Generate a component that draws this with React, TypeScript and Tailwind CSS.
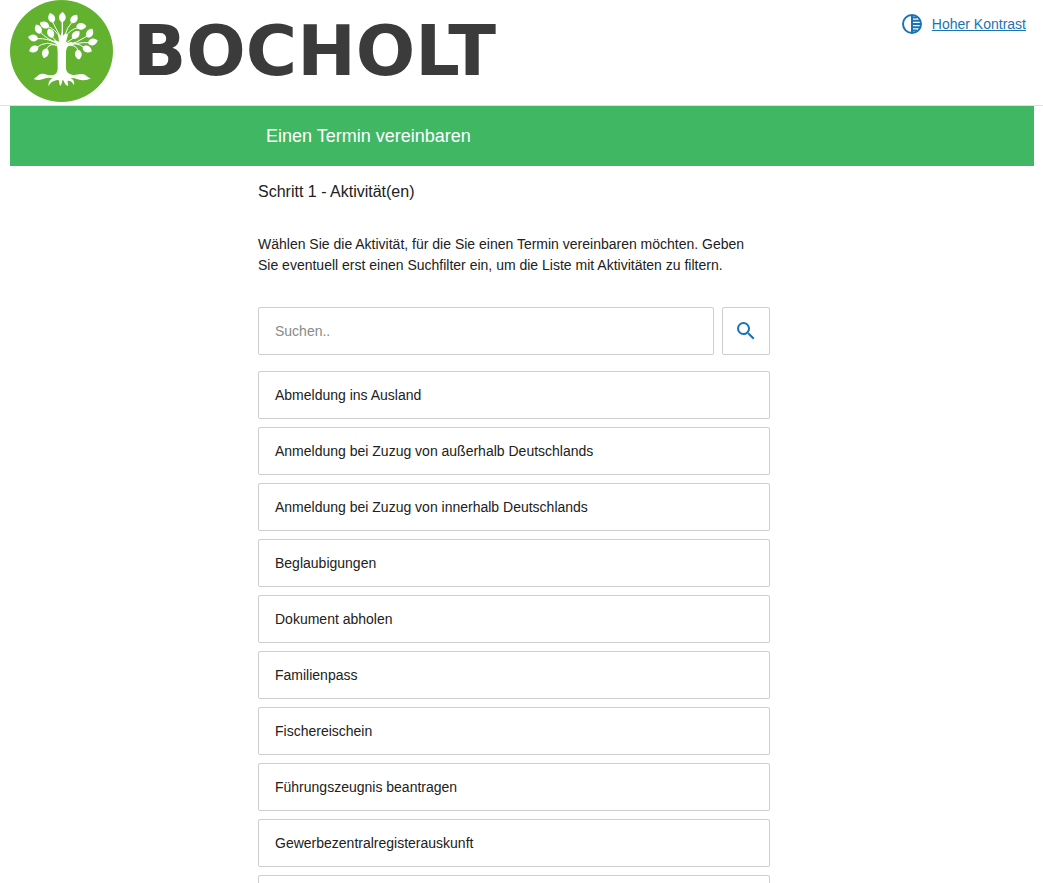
import { useState } from 'react';

const activities = [
  'Abmeldung ins Ausland',
  'Anmeldung bei Zuzug von außerhalb Deutschlands',
  'Anmeldung bei Zuzug von innerhalb Deutschlands',
  'Beglaubigungen',
  'Dokument abholen',
  'Familienpass',
  'Fischereischein',
  'Führungszeugnis beantragen',
  'Gewerbezentralregisterauskunft',
];

// Each leaf: centre x, centre y, rotation of its tip from upright.
const leaves = [
  [155, 54, -20],
  [187, 52, 4],
  [222, 57, 35],
  [134, 75, -65],
  [115, 88, -25],
  [152, 100, -25],
  [243, 79, 88],
  [227, 105, 45],
  [269, 100, 30],
  [278, 126, 75],
  [261, 147, 115],
  [235, 163, 172],
  [100, 114, -80],
  [102, 147, -115],
  [136, 159, 195],
];

function TreeLogo() {
  return (
    <svg viewBox="30 0 309 306" className="h-[102px] w-[103px] shrink-0" aria-hidden="true">
      <ellipse cx="184.500" cy="153" rx="154.500" ry="153" fill="#62b22f" />
      <g fill="#fff">
        {leaves.map(([x, y, r]) => (
          <path
            key={`${x}-${y}`}
            d="M0-16C7-11 11-5 10 2C9 9 5 13 0 14C-5 13-9 9-10 2C-11-5-7-11 0-16Z"
            transform={`translate(${x} ${y}) rotate(${r})`}
          />
        ))}
        <path d="M160 120C169 128 173 139 173 158L173 205C173 219 166 226 154 226C137 226 132 217 119 223C114 226 108 233 101 237C110 240 117 241 127 238C137 235 144 231 157 235C150 240 144 246 146 259C152 246 160 242 173 240C181 240 175 249 181 258C187 251 185 245 188 240C195 243 190 251 203 258C207 255 202 248 203 242C212 242 218 246 221 256C226 246 220 238 211 234C228 233 237 241 250 241C260 241 265 238 273 235C262 233 257 221 244 222C232 222 226 227 216 224C203 221 198 214 198 202L198 158C198 143 206 134 219 129L214 126L197 130L204 104L196 99L190 107L187 90L183 107L174 101L177 125Z" />
      </g>
      <g fill="none" stroke="#fff" strokeWidth="3" strokeLinecap="round">
        <path d="M187 64V112" strokeWidth="4" />
        <path d="M158 66Q168 86 181 110M216 66Q202 80 193 110" />
        <path d="M143 79Q166 86 182 116M236 83Q208 86 192 118" />
        <path d="M121 96Q139 119 178 130M156 110L176 130M222 113L196 130" />
        <path d="M112 116Q144 113 178 135M262 108Q230 130 197 136M270 128Q230 126 196 138" />
        <path d="M110 142Q141 118 177 140M253 143Q229 121 196 140" />
        <path d="M139 148Q149 125 176 138M234 151Q228 130 197 138" />
      </g>
    </svg>
  );
}

function ContrastIcon() {
  return (
    <svg viewBox="0 0 22 22" className="size-[22px]" aria-hidden="true">
      <circle cx="11" cy="11" r="9" fill="none" stroke="#1a73b5" strokeWidth="2" />
      <path
        d="M11 2V20M11 4.500H16M11 7.750H19M11 11H20M11 14.250H19M11 17.500H16"
        fill="none"
        stroke="#1a73b5"
        strokeWidth="2"
      />
    </svg>
  );
}

export default function App() {
  const [query, setQuery] = useState('');
  const shown = activities.filter((name) => name.toLowerCase().includes(query.toLowerCase()));

  return (
    <div className="min-h-screen bg-white font-['Liberation_Sans',Arial,sans-serif] text-sm text-[#212121]">
      <header className="border-b border-[#e0e0e0] pl-px">
        <div className="mx-auto flex h-[105px] max-w-[1024px] items-start justify-between">
          <div className="flex items-center gap-5">
            <TreeLogo />
            <span className="font-['DejaVu_Sans',sans-serif] text-[70px] leading-none font-bold text-[#3b3b3b]">
              BOCHOLT
            </span>
          </div>
          <a href="#kontrast" className="mt-[13px] mr-2 flex items-center gap-[9px] text-[#1a73b5] underline">
            <ContrastIcon />
            Hoher Kontrast
          </a>
        </div>
      </header>

      <div className="pl-px">
        <div className="mx-auto max-w-[1024px]">
          <div className="flex h-15 items-center bg-[#3fb763] pl-64">
            <h1 className="text-lg text-white">Einen Termin vereinbaren</h1>
          </div>

          <main className="ml-62 w-1/2">
            <h2 className="pt-[14px] text-base">Schritt 1 - Aktivität(en)</h2>
            <p className="mt-[30px] pr-3 leading-[21px]">
              Wählen Sie die Aktivität, für die Sie einen Termin vereinbaren möchten. Geben Sie
              eventuell erst einen Suchfilter ein, um die Liste mit Aktivitäten zu filtern.
            </p>

            <form className="mt-[31px] flex gap-2" onSubmit={(e) => e.preventDefault()}>
              <input
                type="text"
                aria-label="Suchen"
                placeholder="Suchen.."
                value={query}
                onChange={(e) => setQuery(e.target.value)}
                className="h-12 min-w-0 flex-1 rounded-xs border border-[#cfcfcf] px-4 placeholder:text-[#8a8a8a]"
              />
              <button
                type="submit"
                aria-label="Suche starten"
                className="flex size-12 items-center justify-center rounded-xs border border-[#cfcfcf]"
              >
                <svg viewBox="0 0 24 24" className="size-6" fill="#1a73b5" aria-hidden="true">
                  <path d="M15.500 14h-.79l-.28-.27A6.471 6.471 0 0 0 16 9.500 6.500 6.500 0 1 0 9.500 16c1.610 0 3.090-.59 4.230-1.570l.27.28v.79l5 4.990L20.490 19l-4.990-5zm-6 0C7.010 14 5 11.990 5 9.500S7.010 5 9.500 5 14 7.010 14 9.500 11.990 14 9.500 14z" />
                </svg>
              </button>
            </form>

            <ul className="mt-4 flex flex-col gap-2">
              {shown.map((name) => (
                <li key={name}>
                  <button
                    type="button"
                    className="h-12 w-full rounded-xs border border-[#cfcfcf] px-4 text-left"
                  >
                    {name}
                  </button>
                </li>
              ))}
              <li className="h-12 rounded-xs border border-[#cfcfcf]" />
            </ul>
          </main>
        </div>
      </div>
    </div>
  );
}
